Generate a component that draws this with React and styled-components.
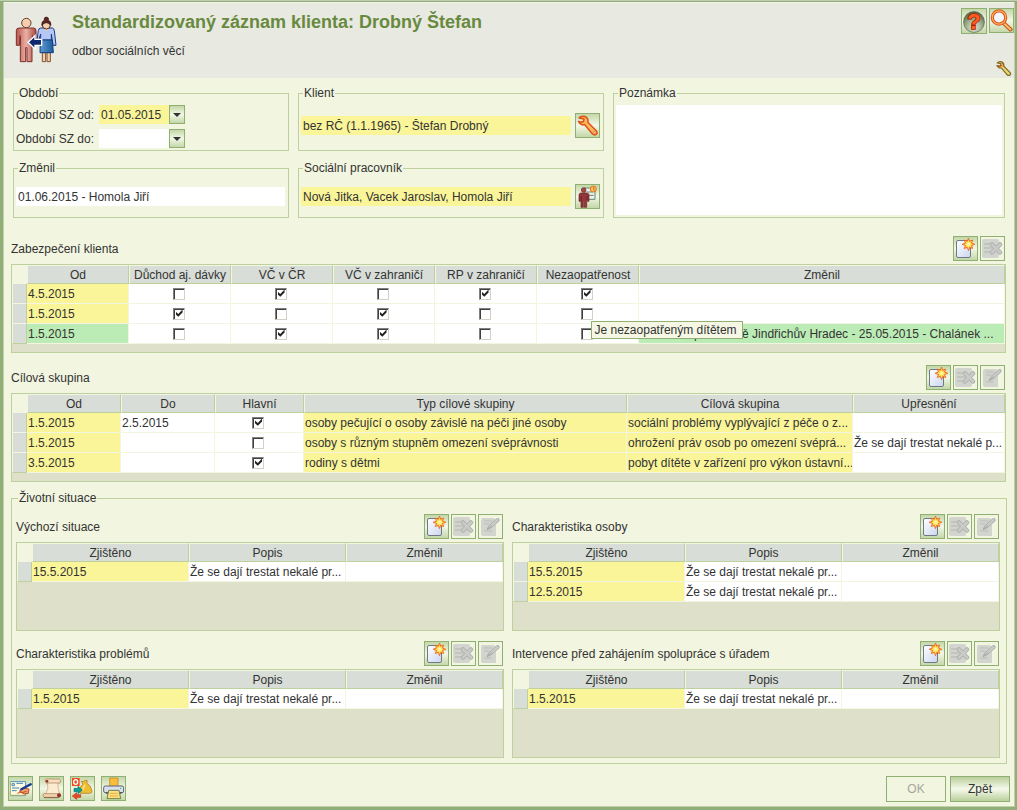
import React from 'react';
import styled, { createGlobalStyle, css } from 'styled-components'

const GlobalStyle = createGlobalStyle`
    * {
        box-sizing: border-box;
    }
    body {
        margin: 0;
        border-top: 1px solid #bfccb5;
        background: #f2f5e0;
    }
    body, button, input, textarea {
        font-family: "Liberation Sans", Arial, sans-serif;
        font-size: 12px;
        line-height: 14px;
        color: #333;
    }
`

const Window = styled.div`
    min-height: calc(100vh - 1px);
    background: #f2f5e0;
    border: 3px solid #92ae78;
    border-top-width: 1px;
    border-right-width: 2px;
    box-shadow: inset 0 0 0 1px #c0d2a5;
`

const Header = styled.header`
    display: flex;
    align-items: flex-start;
    margin: 0 1px 1px;
    height: 76px;
    padding: 11px 0 0 10px;
    background: #e8e9e1;
    border-top: 1px solid #f2f5e0;
`

const Heading = styled.div`
    flex: 1;
    padding-left: 14px;
`

const Title = styled.h1`
    margin: 0;
    font-size: 18px;
    line-height: 16px;
    color: #688a40;
`

const Subtitle = styled.p`
    margin: 14px 0 0;
`

const HeaderTools = styled.div`
    display: flex;
    flex-wrap: wrap;
    justify-content: flex-end;
    width: 60px;
    margin-top: -6px;
    gap: 2px;
`

const IconButton = styled.button`
    display: flex;
    align-items: center;
    justify-content: center;
    flex: none;
    width: ${props => props.$size || 25}px;
    height: ${props => props.$size || 25}px;
    padding: 0;
    border: 1px solid #8fb072;
    background: linear-gradient(#c3d7a8, #f3f7e6 50%, #c3d7a8);

    &:disabled {
        background: #f2f5e0;
    }
`

const PlainButton = styled.button`
    display: flex;
    margin: 24px 2px 0 0;
    padding: 0;
    border: none;
    background: transparent;
`

const Content = styled.main`
    padding: 8px 9px 0 8px;
`

const Fields = styled.div`
    display: grid;
    grid-template-columns: 276fr 306fr 392fr;
    gap: 11px 9px;
    padding: 0 1px 0 2px;
`

const Group = styled.fieldset`
    display: flex;
    align-items: center;
    gap: 4px;
    min-width: 0;
    margin: 0;
    padding: 9px 3px 8px 2px;
    border: 1px solid #bdd09e;
`

const PeriodGroup = styled(Group)`
    display: grid;
    grid-template-columns: auto 1fr;
    gap: 5px;
    padding: 5px 2px 2px;
`

const NoteGroup = styled(Group)`
    grid-row: span 2;
    align-items: stretch;
    padding: 5px 2px 2px;
`

const Legend = styled.legend`
    margin-left: 2px;
    padding: 0 1px;
    line-height: 13px;
`

const TextField = styled.input`
    flex: 1;
    min-width: 0;
    height: 19px;
    padding: 0 2px;
    border: none;
    border-radius: 0;
    background: ${props => props.$required ? '#faf599' : '#fff'};
`

const Combo = styled.div`
    display: flex;
    width: 86px;
`

const ComboButton = styled.button`
    display: flex;
    align-items: center;
    justify-content: center;
    width: 16px;
    height: 19px;
    padding: 0;
    border: 1px solid #8fb072;
    background: linear-gradient(#c3d7a8, #f3f7e6 50%, #c3d7a8);
`

const Note = styled.textarea`
    flex: 1;
    min-width: 0;
    border: none;
    resize: none;
    background: #fff;
`

const Section = styled.section`
    min-width: 0;
    margin-top: ${props => props.$gap || 0}px;
`

const SectionBar = styled.div`
    display: flex;
    align-items: center;
    justify-content: space-between;
    height: 25px;
    margin-bottom: 3px;
`

const SectionTitle = styled.h2`
    margin: 0;
    font-size: 12px;
    font-weight: normal;
`

const Tools = styled.div`
    display: flex;
    gap: 2px;
    padding-right: 1px;
`

const GridFrame = styled.div`
    min-height: 89px;
    border: 1px solid #bdd09e;
    background: #dfe0c9;
`

const Grid = styled.table`
    width: 100%;
    table-layout: fixed;
    border-collapse: separate;
    border-spacing: 0;
`

const HeadCell = styled.th`
    height: 19px;
    padding: 0;
    border: 1px solid #f2f5e0;
    border-right-color: #bdd09e;
    border-bottom-color: #bdd09e;
    background: #d8ddd7;
    font-weight: normal;
    line-height: 14px;
    white-space: nowrap;
`

const CornerCell = styled.td`
    height: 19px;
    padding: 0;
    background: #f2f5e0;
`

const RowMark = styled.td`
    height: 20px;
    padding: 0;
    border-left: 1px solid #f2f5e0;
    border-right: 1px solid #bdd09e;
    border-bottom: 1px solid #f2f5e0;
    background: #d8ddd7;

    tr:last-child > & {
        border-bottom-color: #bdd09e;
    }
`

const tones = {
    yellow: '#faf599',
    green: '#bcecb5',
    white: '#fff',
}

const Cell = styled.td`
    height: 20px;
    padding: 0 0 0 1px;
    border-right: 1px solid #f2f5e0;
    border-bottom: 1px solid #f2f5e0;
    background: ${props => tones[props.$tone]};
    overflow: hidden;
    white-space: nowrap;
    ${props => props.$check && css`
        overflow: visible;
        padding: 0 2px 0 0;
    `}
`

const CheckWrap = styled.div`
    position: relative;
    display: flex;
    justify-content: center;
`

const Check = styled.input.attrs({ type: 'checkbox' })`
    appearance: none;
    display: block;
    width: 12px;
    height: 12px;
    margin: 0;
    border: 1px solid;
    border-color: #808080 #d4d0c8 #d4d0c8 #808080;
    background: #fff;
    box-shadow: inset 1px 1px 0 #404040;

    &:checked::after {
        content: '';
        display: block;
        width: 8px;
        height: 8px;
        margin: 1px 0 0 2px;
        background: #222;
        clip-path: polygon(0 25%, 35% 55%, 88% 0, 88% 36%, 35% 92%, 0 60%);
    }
`

const Tooltip = styled.div`
    position: absolute;
    z-index: 1;
    top: -7px;
    left: calc(50% + 4px);
    padding: 1px 5px 1px 3px;
    border: 1px solid #8fb072;
    background: #f5f7e4;
    color: #333;
    white-space: nowrap;
`

const Situation = styled.fieldset`
    display: grid;
    grid-template-columns: 1fr 1fr;
    gap: 10px 8px;
    min-width: 0;
    margin: 10px -1px 0 0;
    padding: 9px 6px 5px 4px;
    border: 1px solid #bdd09e;
`

const Footer = styled.footer`
    display: flex;
    align-items: flex-start;
    gap: 6px;
    padding: 12px 5px 5px;
`

const Actions = styled.div`
    display: flex;
    gap: 4px;
    margin-left: auto;
`

const ActionButton = styled.button`
    width: 60px;
    height: 26px;
    padding: 0;
    border: 1px solid #8fb072;
    background: linear-gradient(#b9cf9b, #f6f9ec 50%, #b9cf9b);

    &:disabled {
        background: #f2f5e0;
        color: #a3a79a;
    }
`

const ClientsIcon = () => (
    <svg width="44" height="50" viewBox="42 42 132 150" aria-hidden="true">
        <defs>
            <linearGradient id="man" x1="0" x2="1">
                <stop offset="0" stopColor="#b9554e" />
                <stop offset=".5" stopColor="#eab0a4" />
                <stop offset="1" stopColor="#a84a44" />
            </linearGradient>
            <linearGradient id="skirt" x1="0" x2="1">
                <stop offset="0" stopColor="#5f9cd4" />
                <stop offset="1" stopColor="#1c5c9e" />
            </linearGradient>
        </defs>
        <path d="M57 84h44q7 0 7 8v44h-9v-28l-3 24v53H81v-42h-4v42H61v-77l-3 28h-9V92q0-8 8-8z" fill="url(#man)" stroke="#7e2f2b" strokeWidth="3" />
        <path d="M60 104v30M97 104v30" stroke="#7e2f2b" strokeWidth="2" />
        <circle cx="79" cy="69" r="14" fill="#f3cfae" stroke="#6d3a2a" strokeWidth="3" />
        <path d="M127 158h10v27h-10zM141 158h10v27h-10z" fill="#f3cfae" stroke="#80502e" strokeWidth="3" />
        <path d="M121 84h36q5 1 6 8l5 44h-9l-5-34v18h-32v-18l-6 18h-5l4-28q1-7 6-8z" fill="#b5c7f4" stroke="#173a86" strokeWidth="3" />
        <path d="M121 120h36l3 38h-40z" fill="url(#skirt)" stroke="#123c7c" strokeWidth="3" />
        <path d="M130 84l9 10 9-10z" fill="#f3cfae" />
        <circle cx="139" cy="75" r="12" fill="#f3cfae" stroke="#4f2522" strokeWidth="3" />
        <path d="M125 76q0-13 8-15-3-9 6-10 9 1 6 10 8 2 8 15-8-8-14-8t-14 8z" fill="#5b2723" stroke="#3f1a1a" strokeWidth="2" />
        <path d="M84 127l21-20v11h20v18h-20v11z" fill="#10296e" stroke="#fff" strokeWidth="4" />
    </svg>
)

const HelpIcon = () => (
    <svg width="24" height="24" viewBox="0 0 24 24" overflow="visible" aria-hidden="true">
        <defs>
            <radialGradient id="ball" cx=".5" cy=".75" r=".7">
                <stop offset="0" stopColor="#e4ecd6" />
                <stop offset=".6" stopColor="#96a787" />
                <stop offset="1" stopColor="#56684b" />
            </radialGradient>
        </defs>
        <circle cx="12" cy="13" r="10.5" fill="url(#ball)" stroke="#53634a" strokeWidth=".6" />
        <text x="12" y="20" textAnchor="middle" fontFamily="Liberation Sans" fontSize="22" fontWeight="bold" fill="#ff5f1f" stroke="#a81c00" strokeWidth="1.6" paintOrder="stroke">?</text>
    </svg>
)

const SearchIcon = () => (
    <svg width="23" height="23" viewBox="0 0 23 23" aria-hidden="true">
        <path d="M13 13.500l7.500 7" stroke="#c7501d" strokeWidth="4" strokeLinecap="round" />
        <path d="M13.500 14l7 6.500" stroke="#ffc46b" strokeWidth="1.800" strokeLinecap="round" />
        <circle cx="9" cy="8.500" r="6.700" fill="#f3f6fa" stroke="#d8531f" strokeWidth="3.200" />
        <circle cx="9" cy="8.500" r="6.700" fill="none" stroke="#ffb057" strokeWidth="1.200" />
    </svg>
)

const wrenchPath = 'M2.500 7.500Q5 8.500 7.500 7.500L8 5 3 4Q5 1.500 9 2.500q3.500 1.500 3 6l8.500 8.500q1.500 2.500-.5 3.500-2 1-3.500-.5L8.500 10.500Q5 12 2.500 7.500z'

const WrenchIcon = () => (
    <svg width="23" height="23" viewBox="0 0 23 23" aria-hidden="true">
        <path d={wrenchPath} fill="#ffb95c" stroke="#df5318" strokeWidth="1.500" strokeLinejoin="round" />
        <circle cx="18.300" cy="18.300" r="1" fill="#fff" stroke="#df5318" strokeWidth=".6" />
    </svg>
)

const SettingsIcon = () => (
    <svg width="17" height="17" viewBox="0 0 23 23" aria-hidden="true">
        <path d={wrenchPath} fill="#ecd56a" stroke="#7d6d2a" strokeWidth="1.600" strokeLinejoin="round" />
        <path d="M3 8q4 2 6-1M10 4q2 2 1 5" stroke="#c0541c" strokeWidth="1.500" fill="none" />
    </svg>
)

const WorkerIcon = () => (
    <svg width="23" height="23" viewBox="861 315 69 69" aria-hidden="true">
        <path d="M886 324h32v34h-32z" fill="#edf3e4" stroke="#68847a" strokeWidth="3" />
        <path d="M892 336h20M896 346h18" stroke="#68847a" strokeWidth="3" />
        <circle cx="884" cy="330" r="7" fill="#a44a48" stroke="#6d1c22" strokeWidth="2" />
        <path d="M875 339h19q6 1 6 6v19h-5v-15l-2 12v21h-7v-18h-3v18h-7v-33l-1 15h-5v-19q0-5 5-6z" fill="#93353a" stroke="#6d1c22" strokeWidth="2" />
        <circle cx="913" cy="327" r="9" fill="#ffc95b" stroke="#dd701e" strokeWidth="3" />
        <path d="M911 325l4-3v11" fill="none" stroke="#b54716" strokeWidth="2" />
    </svg>
)

const NewIcon = () => (
    <svg width="23" height="23" viewBox="0 0 23 23" aria-hidden="true">
        <defs>
            <linearGradient id="page" x1="0" y1="0" x2="1" y2="1">
                <stop offset="0" stopColor="#fff" />
                <stop offset="1" stopColor="#cbd5ee" />
            </linearGradient>
        </defs>
        <rect x="2.500" y="3.500" width="14" height="17" rx="1.500" fill="url(#page)" stroke="#6f7885" />
        <path d="M14.500 1l1.200 3.300 3-1.200-1.200 3 3.300 1.200-3.300 1.200 1.200 3-3-1.200-1.200 3.300-1.200-3.300-3 1.200 1.200-3-3.300-1.200 3.300-1.200-1.200-3 3 1.200z" fill="#ffe14f" stroke="#ee6a24" strokeLinejoin="round" />
        <circle cx="14.500" cy="7.300" r="1.800" fill="#fff6a8" />
    </svg>
)

const DeleteIcon = () => (
    <svg width="23" height="23" viewBox="0 0 23 23" aria-hidden="true">
        <rect x="1" y="2" width="17" height="19" rx="2" fill="#d2d4ce" />
        <path d="M3 7h8M3 11h8M3 15h8" stroke="#b3b6b1" />
        <path d="M11 7.500l8 8M19 7.500l-8 8" stroke="#aeb0ad" strokeWidth="4.500" strokeLinecap="round" />
        <path d="M11 7.500l8 8M19 7.500l-8 8" stroke="#c9cbc8" strokeWidth="2.500" strokeLinecap="round" />
    </svg>
)

const EditIcon = () => (
    <svg width="23" height="23" viewBox="0 0 23 23" aria-hidden="true">
        <path d="M3 3h12l2 2v16H4q-2 0-2-2V5z" fill="#d2d4ce" />
        <path d="M5 6h8M5 9h5M5 16h8" stroke="#bbbdb8" />
        <path d="M8 14.500l2-4 8-7q3-.5 2 2.500l-8 7z" fill="#c8cac7" stroke="#b1b4b0" />
        <path d="M8 14.500l5-4" stroke="#a2a5a1" />
    </svg>
)

const SignIcon = () => (
    <svg width="23" height="23" viewBox="27 81 69 69" aria-hidden="true">
        <path d="M31 95h46v42H31z" fill="#fffbe0" stroke="#4b8fc0" strokeWidth="3" />
        <path d="M31 137V94M78 135H31" stroke="#f3c936" strokeWidth="2" />
        <path d="M36 101h7v6h-7zM49 100h20M36 114h22M36 122h14" stroke="#4385bd" strokeWidth="3" fill="none" />
        <path d="M58 123l12-8 17 2-2 13-13 2z" fill="#f5a06d" stroke="#b74b20" strokeWidth="3" />
        <path d="M64 118l28-15" stroke="#143c8c" strokeWidth="7" strokeLinecap="round" />
        <path d="M65 128l15-4M52 130l12-4" stroke="#c74c1c" strokeWidth="3" />
    </svg>
)

const ScrollIcon = () => (
    <svg width="23" height="23" viewBox="120 81 69 69" aria-hidden="true">
        <path d="M142 92l34 4q-6 13 4 37l-44 3q12-20 6-44z" fill="#fbeccf" stroke="#c89b79" strokeWidth="2" />
        <path d="M136 89q3-4 10-2h32q7 5 2 12h-33q-12 4-11-10z" fill="#f6dfbc" stroke="#a87458" strokeWidth="2" />
        <circle cx="141" cy="94" r="4" fill="#8f2c23" />
        <path d="M131 131h47q7 5 1 11h-47q-6-5-1-11z" fill="#f0d2ab" stroke="#a87458" strokeWidth="2" />
        <circle cx="177" cy="136" r="6" fill="#96342a" />
        <path d="M132 143h45" stroke="#6f4030" strokeWidth="2" />
    </svg>
)

const BenefitIcon = () => (
    <svg width="23" height="23" viewBox="213 81 69 69" aria-hidden="true">
        <path d="M244 94q6 3 10-2 4-3 8 0l-2 7q14 8 16 24 0 7-7 7h-28q-6-18 8-27z" fill="#efbd32" stroke="#a5701a" strokeWidth="2" />
        <path d="M256 104q-8 6-7 18" stroke="#ffe789" strokeWidth="4" fill="none" />
        <path d="M216 84h23v24h-23z" fill="#f04a21" />
        <ellipse cx="227" cy="96" rx="6" ry="7" fill="none" stroke="#fff" strokeWidth="4" />
        <path d="M222 115h12v-6l13 11-13 11v-6h-12z" fill="#0aa094" stroke="#07776e" strokeWidth="2" />
        <path d="M242 134h-12v-6l-13 10 13 10v-6h12z" fill="#ee4b25" stroke="#b42b12" strokeWidth="2" />
    </svg>
)

const PrintIcon = () => (
    <svg width="23" height="23" viewBox="306 81 69 69" aria-hidden="true">
        <path d="M329 84h25v27h-25z" fill="#f9bd3c" stroke="#c07a18" strokeWidth="2" />
        <rect x="311" y="108" width="60" height="20" rx="5" fill="#d9dfef" stroke="#596276" strokeWidth="3" />
        <path d="M317 129h48" stroke="#3e4655" strokeWidth="4" />
        <path d="M326 121h31l5 25h-41z" fill="#fbe08c" stroke="#6c8041" strokeWidth="3" />
        <path d="M330 130h23M329 138h26" stroke="#efab2c" strokeWidth="3" />
        <circle cx="362" cy="115" r="2" fill="#39a04a" />
    </svg>
)

const DateCombo = ({ id, value, required }) => (
    <Combo>
        <TextField id={id} defaultValue={value} $required={required} />
        <ComboButton aria-label="Vybrat datum">
            <svg width="8" height="4" viewBox="0 0 8 4" aria-hidden="true">
                <path d="M0 0h8L4 4z" fill="#333" />
            </svg>
        </ComboButton>
    </Combo>
)

const Toolbar = ({ editable }) => (
    <Tools>
        <IconButton aria-label="Nový"><NewIcon /></IconButton>
        <IconButton aria-label="Smazat" disabled><DeleteIcon /></IconButton>
        {editable && <IconButton aria-label="Upravit" disabled><EditIcon /></IconButton>}
    </Tools>
)

// cells: string = text, boolean = checkbox
const DataGrid = ({ title, gap, columns, rows, editable }) => (
    <Section $gap={gap}>
        <SectionBar>
            <SectionTitle>{title}</SectionTitle>
            <Toolbar editable={editable} />
        </SectionBar>
        <GridFrame>
            <Grid aria-label={title}>
                <colgroup>
                    <col width="15" />
                    {columns.map((c, i) => <col key={i} width={c.width} />)}
                </colgroup>
                <thead>
                    <tr>
                        <CornerCell />
                        {columns.map(c => <HeadCell key={c.label} scope="col">{c.label}</HeadCell>)}
                    </tr>
                </thead>
                <tbody>
                    {rows.map((row, r) => (
                        <tr key={r}>
                            <RowMark />
                            {columns.map((c, i) => {
                                const value = row.cells[i]
                                if (typeof value === 'boolean') {
                                    return (
                                        <Cell key={i} $tone="white" $check>
                                            <CheckWrap>
                                                <Check defaultChecked={value} aria-label={c.label} />
                                                {row.tip && i === row.tipColumn && <Tooltip role="tooltip">{row.tip}</Tooltip>}
                                            </CheckWrap>
                                        </Cell>
                                    )
                                }
                                const tone = (value && row.tone) || c.tone || 'white'
                                return <Cell key={i} $tone={tone}>{value}</Cell>
                            })}
                        </tr>
                    ))}
                </tbody>
            </Grid>
        </GridFrame>
    </Section>
)

const supportColumns = [
    { label: 'Od', width: 102, tone: 'yellow' },
    { label: 'Důchod aj. dávky', width: 102 },
    { label: 'VČ v ČR', width: 102 },
    { label: 'VČ v zahraničí', width: 102 },
    { label: 'RP v zahraničí', width: 102 },
    { label: 'Nezaopatřenost', width: 102 },
    { label: 'Změnil' },
]

const supportRows = [
    { cells: ['4.5.2015', false, true, false, true, true, ''] },
    { cells: ['1.5.2015', true, false, true, false, false, ''] },
    {
        cells: ['1.5.2015', false, true, true, false, false, 'Kontaktní pracoviště Jindřichův Hradec - 25.05.2015 - Chalánek ...'],
        tone: 'green',
        tip: 'Je nezaopatřeným dítětem',
        tipColumn: 5,
    },
]

const groupColumns = [
    { label: 'Od', width: 94, tone: 'yellow' },
    { label: 'Do', width: 94 },
    { label: 'Hlavní', width: 89 },
    { label: 'Typ cílové skupiny', tone: 'yellow' },
    { label: 'Cílová skupina', width: 226, tone: 'yellow' },
    { label: 'Upřesnění', width: 152 },
]

const groupRows = [
    { cells: ['1.5.2015', '2.5.2015', true, 'osoby pečující o osoby závislé na péči jiné osoby', 'sociální problémy vyplývající z péče o z...', ''] },
    { cells: ['1.5.2015', '', false, 'osoby s různým stupněm omezení svéprávnosti', 'ohrožení práv osob po omezení svéprá...', 'Že se dají trestat nekalé p...'] },
    { cells: ['3.5.2015', '', true, 'rodiny s dětmi', 'pobyt dítěte v zařízení pro výkon ústavní...', ''] },
]

const situationColumns = [
    { label: 'Zjištěno', tone: 'yellow' },
    { label: 'Popis' },
    { label: 'Změnil' },
]

const situations = [
    { title: 'Výchozí situace', dates: ['15.5.2015'] },
    { title: 'Charakteristika osoby', dates: ['15.5.2015', '12.5.2015'] },
    { title: 'Charakteristika problémů', dates: ['1.5.2015'] },
    { title: 'Intervence před zahájením spolupráce s úřadem', dates: ['1.5.2015'] },
]

const App = () => (
    <Window>
        <GlobalStyle />
        <Header>
            <ClientsIcon />
            <Heading>
                <Title>Standardizovaný záznam klienta: Drobný Štefan</Title>
                <Subtitle>odbor sociálních věcí</Subtitle>
            </Heading>
            <HeaderTools>
                <IconButton $size={26} aria-label="Nápověda"><HelpIcon /></IconButton>
                <IconButton aria-label="Hledat"><SearchIcon /></IconButton>
                <PlainButton aria-label="Nastavení"><SettingsIcon /></PlainButton>
            </HeaderTools>
        </Header>
        <Content>
            <Fields>
                <PeriodGroup>
                    <Legend>Období</Legend>
                    <label htmlFor="from">Období SZ od:</label>
                    <DateCombo id="from" value="01.05.2015" required />
                    <label htmlFor="to">Období SZ do:</label>
                    <DateCombo id="to" value="" />
                </PeriodGroup>
                <Group>
                    <Legend>Klient</Legend>
                    <TextField aria-label="Klient" defaultValue="bez RČ (1.1.1965) - Štefan Drobný" $required />
                    <IconButton aria-label="Upravit klienta"><WrenchIcon /></IconButton>
                </Group>
                <NoteGroup>
                    <Legend>Poznámka</Legend>
                    <Note aria-label="Poznámka" />
                </NoteGroup>
                <Group>
                    <Legend>Změnil</Legend>
                    <TextField aria-label="Změnil" defaultValue="01.06.2015 - Homola Jiří" readOnly />
                </Group>
                <Group>
                    <Legend>Sociální pracovník</Legend>
                    <TextField aria-label="Sociální pracovník" defaultValue="Nová Jitka, Vacek Jaroslav, Homola Jiří" $required />
                    <IconButton aria-label="Vybrat pracovníka"><WorkerIcon /></IconButton>
                </Group>
            </Fields>
            <DataGrid title="Zabezpečení klienta" gap={18} columns={supportColumns} rows={supportRows} />
            <DataGrid title="Cílová skupina" gap={12} columns={groupColumns} rows={groupRows} editable />
            <Situation>
                <Legend>Životní situace</Legend>
                {situations.map(s => (
                    <DataGrid
                        key={s.title}
                        title={s.title}
                        columns={situationColumns}
                        rows={s.dates.map(d => ({ cells: [d, 'Že se dají trestat nekalé pr...', ''] }))}
                        editable
                    />
                ))}
            </Situation>
        </Content>
        <Footer>
            <IconButton aria-label="Podepsat"><SignIcon /></IconButton>
            <IconButton aria-label="Listina"><ScrollIcon /></IconButton>
            <IconButton aria-label="Dávky"><BenefitIcon /></IconButton>
            <IconButton aria-label="Tisk"><PrintIcon /></IconButton>
            <Actions>
                <ActionButton disabled>OK</ActionButton>
                <ActionButton>Zpět</ActionButton>
            </Actions>
        </Footer>
    </Window>
);

export default App;
